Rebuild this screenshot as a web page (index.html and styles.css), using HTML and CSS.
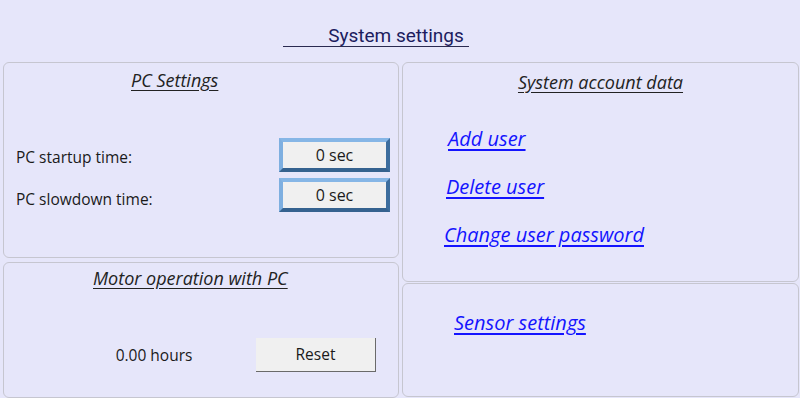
FILE: index.html
```html
<!DOCTYPE html>
<html lang="en">
<head>
  <meta charset="UTF-8">
  <title>System settings</title>
  <link rel="stylesheet" href="styles.css">
</head>
<body>
  <header class="top">
    <span class="top-title">System settings</span>
  </header>
  <div class="grid">
    <div class="col col-left">
      <div class="panel pc-panel">
        <div class="panel-title pc-title">PC Settings</div>
        <div class="pc-row first">
          <span class="label">PC startup time:</span>
          <div class="sec-btn">0 sec</div>
        </div>
        <div class="pc-row">
          <span class="label lower">PC slowdown time:</span>
          <div class="sec-btn">0 sec</div>
        </div>
      </div>
      <div class="panel motor-panel">
        <div class="panel-title motor-title">Motor operation with PC</div>
        <div class="motor-row">
          <span class="hours">0.00 hours</span>
          <div class="reset-btn">Reset</div>
        </div>
      </div>
    </div>
    <div class="col col-right">
      <div class="panel account-panel">
        <div class="panel-title account-title">System account data</div>
        <a class="link add" href="#">Add user</a>
        <a class="link del" href="#">Delete user</a>
        <a class="link pwd" href="#">Change user password</a>
      </div>
      <div class="panel sensor-panel">
        <a class="link sensor" href="#">Sensor settings</a>
      </div>
    </div>
  </div>
</body>
</html>
```

FILE: styles.css
```css
body{
  margin: 0;
  background: #e6e6fa;
  font-family: "Open Sans", "Noto Sans", sans-serif;
  color: #1a1a1a;
}
.top{
  height: 62px;
  box-sizing: border-box;
  padding-top: 25px;
  text-align: center;
  margin-right: 48px;
}
.top-title{
  display: inline-block;
  font-family: Roboto, sans-serif;
  font-size: 19px;
  line-height: 21px;
  color: #1c1c5e;
  padding: 0 5px 0 45px;
  border-bottom: 1px solid #2a2a50;
}
.grid{
  display: grid;
  grid-template-columns: 396px 397px;
  column-gap: 3px;
  padding: 0 3px;
}
.col{
  display: flex;
  flex-direction: column;
}
.col-left{
  gap: 4px;
}
.col-right{
  gap: 1px;
}
.panel{
  box-sizing: border-box;
  border: 1px solid #c6c6d0;
  border-radius: 6px;
  background: #e6e6fa;
}
.pc-panel{
  height: 196px;
  padding-top: 6px;
}
.motor-panel{
  height: 136px;
  padding-top: 4px;
}
.account-panel{
  height: 220px;
  padding-top: 8px;
  display: flex;
  flex-direction: column;
  align-items: flex-start;
}
.sensor-panel{
  height: 114px;
  padding-top: 26px;
}
.panel-title{
  font-size: 18px;
  line-height: 22px;
  font-style: italic;
  text-decoration: underline;
  text-underline-offset: 3px;
  color: #222;
}
.pc-title{
  padding-left: 127px;
}
.motor-title{
  padding-left: 89px;
}
.account-title{
  align-self: center;
}
.pc-row{
  display: flex;
  align-items: center;
  justify-content: space-between;
  padding: 0 8px 0 12px;
  margin-top: 6px;
}
.pc-row.first{
  margin-top: 47px;
}
.label{
  font-size: 15.5px;
  margin-top: 3px;
}
.label.lower{
  margin-top: 7px;
}
.sec-btn{
  box-sizing: border-box;
  width: 111px;
  height: 34px;
  line-height: 26px;
  text-align: center;
  font-size: 16px;
  background: #f0f0f0;
  border: 4px solid;
  border-color: #86b6e6 #3d6d9d #35628f #7eafe0;
}
.motor-row{
  display: flex;
  align-items: center;
  padding-left: 48px;
  margin-top: 49px;
}
.hours{
  width: 204px;
  text-align: center;
  font-size: 15.5px;
}
.reset-btn{
  box-sizing: border-box;
  width: 120px;
  height: 34px;
  line-height: 32px;
  text-align: center;
  font-size: 15.5px;
  background: #f0f0f0;
  border-right: 1px solid #6a6a6a;
  border-bottom: 1px solid #6a6a6a;
}
.link{
  font-size: 20px;
  line-height: 26px;
  font-style: italic;
  color: #1414ff;
  text-underline-offset: 3px;
}
.add{
  margin: 33px 0 0 45px;
}
.del{
  margin: 22px 0 0 43px;
}
.pwd{
  margin: 22px 0 0 41px;
}
.sensor{
  display: inline-block;
  margin-left: 51px;
}
```
